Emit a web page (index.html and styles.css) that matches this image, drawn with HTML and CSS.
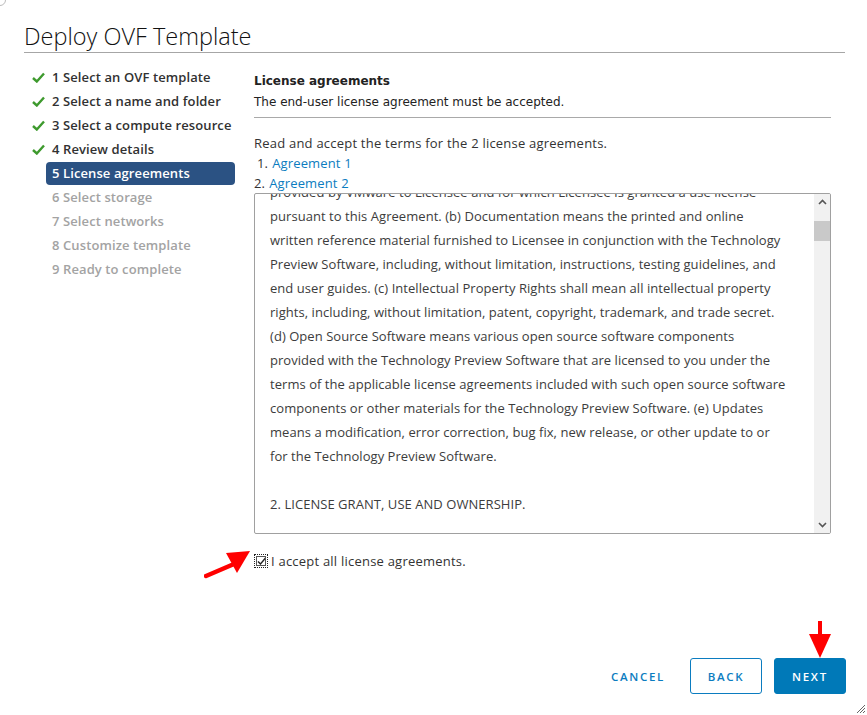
FILE: index.html
```html
<!DOCTYPE html>
<html>
<head>
<meta charset="utf-8">
<link rel="stylesheet" href="styles.css">
</head>
<body>
<div class="dialog">
  <div class="header">
    <h1 class="title">Deploy OVF Template</h1>
  </div>
  <div class="main">
    <nav class="steps">
      <div class="step done"><span class="check"><svg width="13" height="11" viewBox="0 0 13 11"><path d="M1 6 L4.8 9.5 L12 1.5" fill="none" stroke="#3e9a2e" stroke-width="2.4"/></svg></span><span class="label">1 Select an OVF template</span></div>
      <div class="step done"><span class="check"><svg width="13" height="11" viewBox="0 0 13 11"><path d="M1 6 L4.8 9.5 L12 1.5" fill="none" stroke="#3e9a2e" stroke-width="2.4"/></svg></span><span class="label">2 Select a name and folder</span></div>
      <div class="step done"><span class="check"><svg width="13" height="11" viewBox="0 0 13 11"><path d="M1 6 L4.8 9.5 L12 1.5" fill="none" stroke="#3e9a2e" stroke-width="2.4"/></svg></span><span class="label">3 Select a compute resource</span></div>
      <div class="step done"><span class="check"><svg width="13" height="11" viewBox="0 0 13 11"><path d="M1 6 L4.8 9.5 L12 1.5" fill="none" stroke="#3e9a2e" stroke-width="2.4"/></svg></span><span class="label">4 Review details</span></div>
      <div class="step active"><span class="check"></span><span class="label">5 License agreements</span></div>
      <div class="step todo"><span class="check"></span><span class="label">6 Select storage</span></div>
      <div class="step todo"><span class="check"></span><span class="label">7 Select networks</span></div>
      <div class="step todo"><span class="check"></span><span class="label">8 Customize template</span></div>
      <div class="step todo"><span class="check"></span><span class="label">9 Ready to complete</span></div>
    </nav>
    <section class="content">
      <div class="page-head">
        <div class="page-title">License agreements</div>
        <div class="page-desc">The end-user license agreement must be accepted.</div>
      </div>
      <p class="intro">Read and accept the terms for the 2 license agreements.</p>
      <ol class="agreements">
        <li><span class="num">1.</span><a class="link">Agreement 1</a></li>
        <li class="second"><span class="num">2.</span><a class="link">Agreement 2</a></li>
      </ol>
      <div class="license-box">
        <div class="license-view">
          <div class="license-text">provided by VMware to Licensee and for which Licensee is granted a use license<br>pursuant to this Agreement. (b) Documentation means the printed and online<br>written reference material furnished to Licensee in conjunction with the Technology<br>Preview Software, including, without limitation, instructions, testing guidelines, and<br>end user guides. (c) Intellectual Property Rights shall mean all intellectual property<br>rights, including, without limitation, patent, copyright, trademark, and trade secret.<br>(d) Open Source Software means various open source software components<br>provided with the Technology Preview Software that are licensed to you under the<br>terms of the applicable license agreements included with such open source software<br>components or other materials for the Technology Preview Software. (e) Updates<br>means a modification, error correction, bug fix, new release, or other update to or<br>for the Technology Preview Software.<br><br>2. LICENSE GRANT, USE AND OWNERSHIP.</div>
        </div>
        <div class="scrollbar">
          <div class="arrow"><svg width="9" height="6" viewBox="0 0 9 6"><path d="M1 5 L4.5 1.5 L8 5" fill="none" stroke="#555" stroke-width="1.6"/></svg></div>
          <div class="thumb"></div>
          <div class="track"></div>
          <div class="arrow"><svg width="9" height="6" viewBox="0 0 9 6"><path d="M1 1 L4.5 4.5 L8 1" fill="none" stroke="#555" stroke-width="1.6"/></svg></div>
        </div>
      </div>
      <label class="accept">
        <span class="box"><svg width="11" height="11" viewBox="0 0 11 11"><path d="M2 5.5 L4.5 8 L9.5 2" fill="none" stroke="#222" stroke-width="1.4"/></svg></span>
        <span>I accept all license agreements.</span>
      </label>
    </section>
  </div>
  <div class="footer">
    <button class="btn flat">CANCEL</button>
    <button class="btn outline">BACK</button>
    <button class="btn primary">NEXT</button>
  </div>
  <svg class="red-arrow arrow-left" width="50" height="30" viewBox="0 0 50 30"><path d="M2 27 L30 15" stroke="#ff0000" stroke-width="4.5" stroke-linecap="round"/><polygon points="46,2 22,4 33,24" fill="#ff0000"/></svg>
  <svg class="red-arrow arrow-down" width="24" height="40" viewBox="0 0 24 40"><path d="M12 1 L12 20" stroke="#ff0000" stroke-width="4"/><polygon points="1,14 23,14 12,38" fill="#ff0000"/></svg>
  <svg class="resize" width="8" height="8" viewBox="0 0 8 8"><path d="M0 8 L8 0 M3 8 L8 3 M6 8 L8 6" stroke="#666" stroke-width="1"/></svg>
  <div class="corner"></div>
</div>
</body>
</html>
```

FILE: styles.css
```css
* { box-sizing: border-box; }
html, body { margin: 0; padding: 0; background: #fff; }
body {
  font-family: "Open Sans", "Noto Sans", sans-serif;
  color: #333;
  width: 867px;
  height: 715px;
  overflow: hidden;
}
.dialog {
  position: relative;
  width: 867px;
  height: 715px;
  display: flex;
  flex-direction: column;
}
.header {
  padding: 21px 22px 0 24px;
}
.title {
  margin: 0;
  font-size: 23.5px;
  font-weight: 300;
  line-height: 31px;
  color: #111;
  padding-bottom: 0;
  border-bottom: 1px solid #a6a6a6;
}
.main {
  display: flex;
  padding-top: 12px;
  padding-left: 24px;
  gap: 19px;
}
.steps {
  width: 211px;
  display: flex;
  flex-direction: column;
}
.step {
  display: flex;
  align-items: center;
  height: 24px;
  font-size: 13px;
  font-weight: 600;
  letter-spacing: 0.1px;
}
.step .check {
  width: 22px;
  padding-left: 8px;
  display: flex;
  align-items: center;
}
.step .label {
  flex: 1;
  height: 24px;
  line-height: 24px;
  padding-left: 6px;
  border-radius: 4px;
  white-space: nowrap;
}
.step.done .label { color: #313131; }
.step.active .label { background: #2b5283; color: #fff; height: 23px; line-height: 23px; }
.step.todo .label { color: #a3a3a3; }

.content {
  width: 577px;
  display: flex;
  flex-direction: column;
}
.page-head {
  font-family: "DejaVu Sans", Verdana, sans-serif;
  font-size: 12px;
  color: #222;
  border-bottom: 1px solid #a9a9a9;
  padding-top: 6px;
  padding-bottom: 4px;
}
.page-title { font-weight: bold; line-height: 20px; }
.page-desc { line-height: 22px; }
.intro {
  margin: 15px 0 0 0;
  font-size: 13px;
  line-height: 20px;
  color: #333;
  letter-spacing: 0.22px;
}
.agreements {
  list-style: none;
  margin: 0;
  padding: 0;
  font-size: 13px;
  letter-spacing: 0.15px;
}
.agreements li { line-height: 20px; height: 20px; }
.agreements .num { display: inline-block; padding-left: 3px; margin-right: 4px; color: #333; }
.agreements li.second .num { padding-left: 0; }
.link { color: #0b7cc0; text-decoration: none; }

.license-box {
  margin-top: 0;
  height: 341px;
  border: 1px solid #a0a0a0;
  border-radius: 2px;
  display: flex;
  overflow: hidden;
}
.license-view {
  flex: 1;
  overflow: hidden;
  padding-left: 15px;
}
.license-text {
  margin-top: -14px;
  font-size: 13px;
  line-height: 24px;
  color: #3c3c3c;
  white-space: nowrap;
  letter-spacing: 0.05px;
}
.scrollbar {
  width: 16px;
  background: #f1f1f1;
  display: flex;
  flex-direction: column;
}
.scrollbar .arrow {
  height: 16px;
  display: flex;
  align-items: center;
  justify-content: center;
}
.scrollbar .thumb {
  height: 20px;
  margin: 11px 0 0 0;
  background: #c9c9c9;
}
.scrollbar .track { flex: 1; }

.accept {
  display: flex;
  align-items: center;
  margin-top: 18px;
  font-size: 13px;
  color: #333;
  gap: 3px;
  letter-spacing: 0.22px;
}
.accept .box {
  width: 14px;
  height: 14px;
  border: 1px dotted #222;
  display: flex;
  align-items: center;
  justify-content: center;
  outline: 1px solid #555;
  outline-offset: -3px;
}

.footer {
  margin-top: auto;
  display: flex;
  justify-content: flex-end;
  gap: 12px;
  padding: 0 21px 21px 0;
}
.btn {
  font-family: "Open Sans", "Noto Sans", sans-serif;
  height: 36px;
  min-width: 72px;
  padding: 0 12px;
  font-size: 11.5px;
  font-weight: 600;
  letter-spacing: 1.7px;
  border-radius: 3px;
  border: 1px solid transparent;
  background: transparent;
  color: #0b7cc0;
}
.btn.outline { border-color: #0b7cc0; background: #fff; }
.btn.primary { background: #0079b8; border-color: #0079b8; color: #fff; }

.red-arrow { position: absolute; }
.arrow-left { left: 204px; top: 549px; }
.arrow-down { left: 808px; top: 620px; }
.resize { position: absolute; right: 2px; bottom: 2px; }
.corner {
  position: absolute;
  left: -6px;
  top: -6px;
  width: 12px;
  height: 12px;
  border: 1px solid #bbb;
  border-radius: 6px;
}
```
